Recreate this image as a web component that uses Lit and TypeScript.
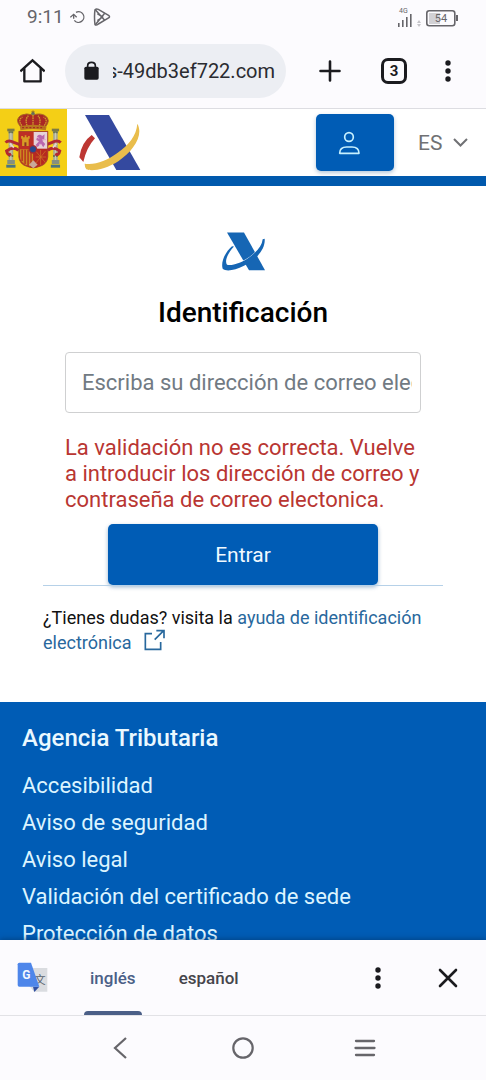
import { LitElement, html, css, svg } from "lit";
import { customElement } from "lit/decorators.js";

const dots = html`<svg width="12" height="24" viewBox="0 0 12 24" aria-hidden="true">
  <circle cx="6" cy="4" r="2.7" fill="#1b1b1f" /><circle cx="6" cy="12" r="2.7" fill="#1b1b1f" /><circle cx="6" cy="20" r="2.7" fill="#1b1b1f" />
</svg>`;

const buttonReset = css`
  :host { display: block; font-family: Roboto, "Noto Sans", sans-serif; }
  * { box-sizing: border-box; }
  svg { display: block; flex: none; }
  button { font: inherit; border: 0; padding: 0; background: none; color: inherit; cursor: pointer; display: flex; align-items: center; justify-content: center; }
`;

@customElement("browser-bar")
export class BrowserBar extends LitElement {
  static styles = [buttonReset, css`
    :host { background: #fcfbfe; border-bottom: 1px solid #dddde2; color: #1b1b1f; }
    .status { display: flex; align-items: center; height: 33px; padding: 0 27px; color: #66656a; font-size: 19px; line-height: 24px; }
    .status .icons { display: flex; align-items: center; gap: 7px; margin-left: 6px; flex: 1; }
    .status .right { display: flex; align-items: center; }
    .toolbar { display: flex; align-items: center; height: 75px; padding: 0 32px 0 20px; }
    .address { flex: 1; min-width: 0; display: flex; align-items: center; gap: 14px; height: 54px; margin: 0 33px 0 20px; padding: 0 11px 0 19px; border-radius: 27px; background: #eceef3; }
    .address input { flex: 1; min-width: 0; width: 0; border: 0; padding: 0; background: none; outline: 0; font: 20px/28px Roboto, sans-serif; color: #2a2b30; }
    .tabs { margin: 0 35px 0 40px; width: 26px; height: 26px; border: 3px solid #1b1b1f; border-radius: 7px; font-size: 15px; line-height: 20px; font-weight: 700; }
  `];

  firstUpdated() {
    const field = this.renderRoot.querySelector("input")!;
    document.fonts.ready.then(() => { field.scrollLeft = field.scrollWidth; });
  }

  render() {
    return html`
      <div class="status">
        <span>9:11</span>
        <div class="icons">
          <svg width="16" height="16" viewBox="208 26 48 46" fill="none" stroke="#66656a" stroke-width="4"><path d="M226 35A16 16 0 1 1 221 59" /><path d="M209 50L219 41L228 50" /><path d="M219 42V54" /></svg>
          <svg width="18" height="18" viewBox="277 21 54 54" fill="none" stroke="#66656a" stroke-width="4.500" stroke-linejoin="round"><path d="M283 26Q280 48 283 71Q287 74 293 69L325 50Q328 47 325 44L293 25Q287 22 283 26Z" /><path d="M284 26L312 58M284 71L312 37M290 38L306 48L290 59" /></svg>
        </div>
        <div class="right">
          <svg width="62" height="22" viewBox="0 0 62 22">
            <text x="2" y="7" font-size="7" font-family="Roboto, sans-serif" fill="#66656a">4G</text>
            <g fill="#66656a"><rect x="1" y="17" width="1.600" height="4" /><rect x="5" y="14" width="1.600" height="7" /><rect x="9" y="11" width="1.600" height="10" /><rect x="13" y="8" width="1.600" height="13" /></g>
            <g fill="#c5c4c9"><path d="M20 17L22 14L24 17ZM20 18L22 21L24 18Z" /></g>
            <rect x="29.8" y="4.800" width="28" height="15" rx="2.5" fill="none" stroke="#66656a" stroke-width="1.6" />
            <rect x="32" y="7" width="11" height="11" fill="#d2d1d5" /><rect x="59" y="9" width="2" height="6" fill="#66656a" />
            <text x="44" y="16" text-anchor="middle" font-size="11" font-family="Roboto, sans-serif" fill="#66656a">54</text>
          </svg>
        </div>
      </div>
      <div class="toolbar">
        <button aria-label="Inicio"><svg width="25" height="26" viewBox="60 172 75 78" fill="none" stroke="#1b1b1f" stroke-width="7"><path d="M61 212L97.500 179L134 212" /><path d="M73 203V242H122V203" stroke-linejoin="round" /></svg></button>
        <label class="address">
          <svg width="15" height="19" viewBox="253 182 45 57"><rect x="254" y="199" width="43" height="39" rx="5" fill="#1b1b1f" /><path d="M264 201V196Q264 186 275.500 186Q287 186 287 196V201" fill="none" stroke="#1b1b1f" stroke-width="5" /></svg>
          <input type="text" aria-label="Dirección web" .value=${"s-49db3ef722.com"} />
        </label>
        <button aria-label="Nueva pestaña"><svg width="22" height="22" viewBox="0 0 22 22" stroke="#1b1b1f" stroke-width="2.600" stroke-linecap="round"><path d="M11 1.500V20.500M1.500 11H20.500" /></svg></button>
        <button class="tabs" aria-label="Pestañas">3</button>
        <button aria-label="Menú">${dots}</button>
      </div>`;
  }
}

const column = (x: number) => svg`
  <g transform="translate(${x} 0)">
    <rect x="4" y="86" width="22" height="8" fill="#7c7a45" /><rect x="8" y="94" width="14" height="88" fill="#a9a98a" />
    <path d="M8 97H22M8 168H22" stroke="#66704e" stroke-width="6" /><path d="M15 98V180" stroke="#c9c9b8" stroke-width="4" />
    <rect x="4" y="180" width="23" height="12" fill="#858f81" /><path d="M1 194H29V203H1Z" fill="#4b7480" />
  </g>`;

@customElement("site-header")
export class SiteHeader extends LitElement {
  static styles = [buttonReset, css`
    :host { background: #fff; }
    header { display: flex; align-items: center; height: 77px; border-bottom: 10px solid #0059ad; padding-right: 18px; }
    .home { display: flex; align-items: center; gap: 12px; margin-right: auto; }
    .user { width: 78px; height: 57px; padding-right: 12px; border-radius: 5px; background: #005cb5; box-shadow: 0 2px 4px #0045884d; }
    .language { display: flex; align-items: center; gap: 10px; margin-left: 24px; }
    select { appearance: none; border: 0; padding: 0; background: none; font: 21px/28px Roboto, sans-serif; color: #707174; width: 25px; }
  `];

  render() {
    return html`<header>
      <a class="home" href="#" aria-label="Agencia Tributaria">
        <svg width="67" height="67" viewBox="0 27 203 201" preserveAspectRatio="none">
          <rect y="27" width="203" height="201" fill="#f4cf16" />
          ${column(18)}${column(153)}
          <path d="M17 128Q25 118 42 127L60 134M56 151Q40 138 20 153Q23 168 34 162" fill="none" stroke="#b22a32" stroke-width="9" />
          <path d="M184 128Q174 118 158 127L141 134M145 151Q160 138 181 153Q178 168 167 162" fill="none" stroke="#b22a32" stroke-width="9" />
          <path d="M30 131L42 143M160 143L171 131" stroke="#e9d3cf" stroke-width="5" />
          <path d="M57 94H145V171Q143 194 118 200Q101 207 84 200Q59 194 57 171Z" fill="#bd2e25" stroke="#8f3c2c" stroke-width="2" />
          <path d="M102 96H143V146H102Z" fill="#e6d2d8" />
          <path d="M67 138V116H64V108H70V112H75V106H80V112H85V108H90V116H87V138Z" fill="#d79b25" /><path d="M74 138V127H80V138Z" fill="#8a3127" />
          <path d="M113 108Q120 101 128 108L135 103L134 119L128 122L137 132L131 142L124 131L114 141L108 135L118 124L110 120Z" fill="#b968ad" />
          <path d="M112 112L119 115M128 119H139M118 133H126" stroke="#e4a6cf" stroke-width="3" />
          <path d="M60 148H100V200Q78 199 66 185Q60 178 60 165Z" fill="#cc8a20" /><path d="M67 149V183M76 149V192M85 149V198M94 149V200" stroke="#b62920" stroke-width="4" />
          <path d="M104 148H142V170Q139 193 104 199Z" fill="#b62920" /><path d="M108 153L138 188M138 153L108 190M123 150V195M108 171H140" stroke="#cf7c25" stroke-width="2" />
          <path d="M88 194L101 181L114 194L101 205Z" fill="#c9a99a" />
          <circle cx="100" cy="148" r="13" fill="#a52b30" /><circle cx="100" cy="148" r="9" fill="#28488d" />
          <path d="M62 80Q43 58 64 46Q79 38 100 45Q122 38 137 47Q155 60 138 80Z" fill="#aa2824" stroke="#a66a21" stroke-width="3" />
          <path d="M66 77Q53 59 68 51M82 77Q75 57 86 47M100 78V43M119 77Q125 57 115 47M134 77Q147 60 132 51" fill="none" stroke="#d09a2b" stroke-width="4" stroke-dasharray="5 2" />
          <path d="M60 79Q100 69 141 79L139 91Q100 84 62 91Z" fill="#b9791e" /><path d="M67 83H134" stroke="#a82b22" stroke-width="4" stroke-dasharray="6 5" />
          <circle cx="100" cy="40" r="5" fill="#587070" /><path d="M100 31V42M95 35H105" stroke="#8e651b" stroke-width="2" />
        </svg>
        <svg width="62" height="57" viewBox="237 38 186 171">
          <path d="M255 41H327L421 206H349Z" fill="#34499f" />
          <path d="M275 101L285 111Q260 138 250 182L238 168Q244 123 275 101Z" fill="#bd3733" />
          <path d="M412 67C432 102 399 150 356 179C318 204 276 211 259 204Q254 199 254 187C284 192 320 179 351 156C388 129 409 103 412 67Z" fill="#e9bd4c" />
        </svg>
      </a>
      <button class="user" aria-label="Acceso de usuario"><svg width="22" height="24" viewBox="116 90 66 70" fill="none" stroke="#c7f1ff" stroke-width="5"><circle cx="149" cy="107" r="13" /><path d="M121 156H179Q179 137 158 137H142Q121 137 121 156Z" stroke-linejoin="round" /></svg></button>
      <label class="language">
        <select aria-label="Idioma"><option>ES</option><option>EN</option></select>
        <svg width="15" height="9" viewBox="0 0 15 9" fill="none" stroke="#707174" stroke-width="2"><path d="M1 1L7.500 7.500L14 1" /></svg>
      </label>
    </header>`;
  }
}

@customElement("login-form")
export class LoginForm extends LitElement {
  static styles = [buttonReset, css`
    :host { padding: 45px 43px 47px; color: #111; background: #fff; }
    .logo { margin: 0 auto; }
    h1 { margin: 23px 0 21px; text-align: center; color: #000; font-size: 28px; line-height: 36px; font-weight: 500; }
    form { padding: 0 22px; }
    .mail { display: block; width: 100%; height: 61px; padding: 0 8px 0 16px; border: 1px solid #cfd0d1; border-radius: 4px; background: #fff; color: #111; font: 22px/28px Roboto, sans-serif; outline: 0; }
    .mail::placeholder { color: #717a83; opacity: 1; }
    .error { margin: 22px 0 11px; color: #b93632; font-size: 22px; line-height: 26px; }
    .enter { width: calc(100% - 86px); height: 61px; margin: 0 auto; border-radius: 5px; background: #005cb5; color: #f0f9ff; font-size: 21px; line-height: 28px; box-shadow: 0 2px 4px #00458866; }
    .help { margin: 0; padding-top: 19px; border-top: 1px solid #b6d1e8; font-size: 18px; line-height: 25px; }
    .help a { color: #28689d; text-decoration: none; }
    .help svg { display: inline-block; margin: -4px 0 0 8px; vertical-align: -2px; }
  `];

  render() {
    return html`
      <svg class="logo" width="45" height="41" viewBox="14 16 135 120">
        <path d="M32 19H83L146 132H98Z" fill="#1666b4" />
        <path d="M139 49Q122 84 88 102Q62 116 38 117" fill="none" stroke="#fff" stroke-width="5" />
        <path d="M139 39L145 38C148 70 119 101 83 119C55 133 30 137 19 128C13 109 25 79 47 60L53 61C34 81 24 105 32 116C50 119 75 110 98 94C123 76 137 58 139 39Z" fill="#1666b4" />
      </svg>
      <h1>Identificación</h1>
      <form @submit=${(e: Event) => e.preventDefault()}>
        <input class="mail" type="email" aria-label="Correo electrónico" aria-describedby="error" placeholder="Escriba su dirección de correo electrónico" />
        <p class="error" id="error">La validación no es correcta. Vuelve a introducir los dirección de correo y contraseña de correo electonica.</p>
        <button class="enter" type="submit">Entrar</button>
      </form>
      <p class="help">¿Tienes dudas? visita la <a href="#">ayuda de identificación electrónica
        <svg width="22" height="22" viewBox="344 357 66 66" fill="none" stroke="#28689d" stroke-width="5"><path d="M368 371H348V418H394V396M376 389L403 362M381 362H404V385" /></svg></a></p>`;
  }
}

@customElement("site-footer")
export class SiteFooter extends LitElement {
  static styles = [buttonReset, css`
    :host { background: #005cb5; color: #eaf8ff; padding: 21px 22px; }
    h2 { margin: 0 0 20px; font-size: 24px; line-height: 30px; font-weight: 500; }
    ul { list-style: none; margin: 0; padding: 0; display: flex; flex-direction: column; gap: 11px; }
    li { font-size: 22px; line-height: 26px; }
    a { color: #dcf4ff; text-decoration: none; }
  `];

  render() {
    const links = ["Accesibilidad", "Aviso de seguridad", "Aviso legal", "Validación del certificado de sede", "Protección de datos"];
    return html`<h2>Agencia Tributaria</h2><ul>${links.map((l) => html`<li><a href="#">${l}</a></li>`)}</ul>`;
  }
}

@customElement("bottom-bars")
export class BottomBars extends LitElement {
  static styles = [buttonReset, css`
    :host { background: #fcfbfe; box-shadow: 0 -1px 5px #002c5880; }
    .translate { display: flex; align-items: center; height: 76px; padding: 0 28px 0 17px; border-bottom: 1px solid #e2e2e6; }
    .languages { display: flex; align-self: stretch; gap: 31px; margin: 0 auto 0 36px; }
    .languages button { padding: 0 6px; font-size: 17px; line-height: 24px; font-weight: 500; color: #45454b; border-bottom: 4px solid transparent; border-top: 4px solid transparent; }
    .languages .active { position: relative; color: #4b5f87; }
    .languages .active::after { content: ""; position: absolute; left: 0; right: 0; bottom: -4px; height: 4px; border-radius: 4px 4px 0 0; background: #4b5f87; }
    .close { margin-left: 54px; }
    .system { display: flex; align-items: center; justify-content: center; height: 64px; gap: 100px; }
  `];

  render() {
    return html`
      <div class="translate">
        <svg width="31" height="31" viewBox="50 96 93 93">
          <path d="M91 114H141V185H101L88 169Z" fill="#dadce0" />
          <text x="119" y="161" text-anchor="middle" font-size="34" font-family="Noto Sans CJK SC, sans-serif" fill="#59636e">文</text>
          <path d="M98 170H117L102 186Z" fill="#3150a2" />
          <path d="M57 98H92L117 170H57Q52 170 52 165V103Q52 98 57 98Z" fill="#4e86ea" />
          <text x="78" y="147" text-anchor="middle" font-size="36" font-weight="700" font-family="Roboto, sans-serif" fill="#f4f8ff">G</text>
        </svg>
        <div class="languages" role="tablist">
          <button class="active" role="tab" aria-selected="true">inglés</button>
          <button role="tab" aria-selected="false">español</button>
        </div>
        <button aria-label="Opciones de traducción">${dots}</button>
        <button class="close" aria-label="Cerrar"><svg width="20" height="20" viewBox="0 0 20 20" stroke="#1b1b1f" stroke-width="2.600" stroke-linecap="round"><path d="M2 2L18 18M18 2L2 18" /></svg></button>
      </div>
      <div class="system">
        <button aria-label="Atrás"><svg width="22" height="24" viewBox="0 0 22 24" fill="none" stroke="#66656a" stroke-width="2.200"><path d="M16 2L5 12L16 22" /></svg></button>
        <button aria-label="Inicio"><svg width="22" height="22" viewBox="0 0 22 22" fill="none" stroke="#66656a" stroke-width="2.200"><circle cx="11" cy="11" r="9.700" /></svg></button>
        <button aria-label="Recientes"><svg width="22" height="18" viewBox="0 0 22 18" stroke="#66656a" stroke-width="2.300" stroke-linecap="round"><path d="M2 2H20M1.500 9H20.500M2 16H20" /></svg></button>
      </div>`;
  }
}

@customElement("app-root")
export class AppRoot extends LitElement {
  static styles = css`
    :host { display: flex; flex-direction: column; height: 100vh; background: #fff; overflow: hidden; }
    main { flex: 1; min-height: 0; overflow: hidden; }
    browser-bar, bottom-bars { flex: none; }
    bottom-bars { position: relative; }
  `;

  render() {
    return html`
      <browser-bar></browser-bar>
      <main>
        <site-header></site-header>
        <login-form></login-form>
        <site-footer></site-footer>
      </main>
      <bottom-bars></bottom-bars>`;
  }
}
